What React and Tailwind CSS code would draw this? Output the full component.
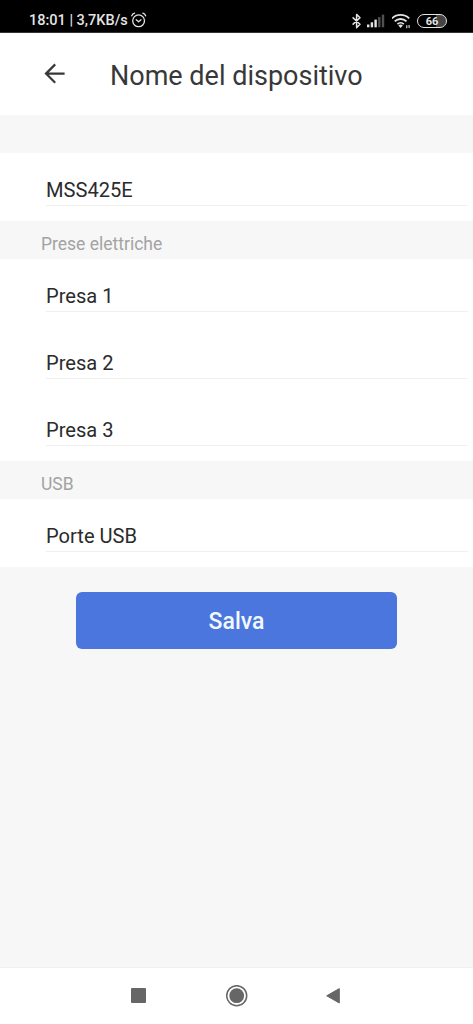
const sections = [
  { title: "", items: ["MSS425E"] },
  { title: "Prese elettriche", items: ["Presa 1", "Presa 2", "Presa 3"] },
  { title: "USB", items: ["Porte USB"] },
];

function AlarmIcon() {
  return (
    <svg className="ml-[3px] w-4 h-4" viewBox="0 0 16 16" fill="none" stroke="currentColor" strokeWidth="1.3" strokeLinecap="round" strokeLinejoin="round">
      <circle cx="7.6" cy="8.8" r="5.9" />
      <path d="M.8 3.8C1.2 2.6 2.2 1.6 3.6 1.2M14.6 3.8c-.4-1.2-1.4-2.2-2.8-2.6M5.2 7.8l2.4 2 2.4-2" />
    </svg>
  );
}

function BluetoothIcon() {
  return (
    <svg className="w-[10px] h-[16px]" viewBox="0 0 10 16" fill="none" stroke="currentColor" strokeWidth="1.5" strokeLinejoin="round">
      <path d="M.6 4.4l7.4 6.8-3.4 3.4V1.4L8 4.8.6 11.6" />
    </svg>
  );
}

function SignalIcon() {
  return (
    <svg className="ml-[5px] w-[18px] h-[14px]" viewBox="0 0 18 14" fill="currentColor">
      <rect x="0" y="10.5" width="2.4" height="2.8" />
      <rect x="3.7" y="8.3" width="2.4" height="5" />
      <rect x="7.4" y="5.6" width="2.4" height="7.7" />
      <rect x="11.1" y="3" width="2.4" height="10.3" opacity="0.35" />
      <rect x="14.8" y="0.6" width="2.4" height="12.7" opacity="0.35" />
    </svg>
  );
}

function WifiIcon() {
  return (
    <svg className="ml-[7px] w-[20px] h-[16px]" viewBox="0 0 20 16" fill="none" stroke="currentColor" strokeWidth="1.8">
      <path d="M0 5.4a12.4 12.4 0 0 1 17.2 0M2.7 8.4a8.4 8.4 0 0 1 11.8 0M5.4 11.2a4.6 4.6 0 0 1 6.4 0" />
      <path d="M6.4 12.6 8.6 15l2.2-2.4a3.2 3.2 0 0 0-4.4 0Z" fill="currentColor" stroke="none" />
      <path d="M14.8 12.2v3M17.1 12v3" strokeWidth="1.1" />
    </svg>
  );
}

function StatusBar() {
  return (
    <div className="flex h-[33px] shrink-0 items-center justify-between border-b border-[#333] bg-black pl-[29px] pr-[26px] pt-[8px] text-[#e4e4e4]">
      <div className="flex items-center">
        <span className="pt-[3px] text-[14.5px] leading-none font-medium whitespace-nowrap">18:01 | 3,7KB/s</span>
        <AlarmIcon />
      </div>
      <div className="flex items-center pt-px">
        <BluetoothIcon />
        <SignalIcon />
        <WifiIcon />
        <div className="ml-[5px] flex h-[14px] w-[30px] items-center justify-center rounded-full border-[1.5px] border-[#e4e4e4] bg-linear-to-r from-black from-65% to-[#444] to-65% pt-px text-[11px] leading-none font-bold">
          66
        </div>
      </div>
    </div>
  );
}

function Header() {
  return (
    <header className="flex h-[82px] shrink-0 items-center bg-white text-[#383838]">
      <svg className="ml-[44px] w-[22px] h-[22px]" viewBox="0 0 22 22" fill="none" stroke="currentColor" strokeWidth="2.2">
        <path d="M20.6 10.6H2M11.2 1.4 2 10.6l9.2 9.2" />
      </svg>
      <h1 className="ml-[44px] pt-[3px] text-[27px] leading-8 whitespace-nowrap">Nome del dispositivo</h1>
    </header>
  );
}

function Section({ title, items }) {
  return (
    <section>
      <h2 className="flex h-[38px] items-center pl-[41px] pt-[8px] text-[17.5px] text-[#a3a3a3]">{title}</h2>
      <div className="bg-white pb-px">
        {items.map((item) => (
          <div key={item} className="h-[67px] pl-[46px] pr-[5px]">
            <div className="h-[53px] border-b border-[#f0f0f0] pt-[25px] text-[20.1px] leading-6 text-[#2b2b2b]">{item}</div>
          </div>
        ))}
      </div>
    </section>
  );
}

function NavBar() {
  return (
    <nav className="flex h-[57px] shrink-0 items-center border-t border-[#f0f0f0] bg-white text-[#666]">
      <div className="ml-[131px] mb-px h-[15px] w-[15px] rounded-[1px] bg-[#666]" />
      <svg className="ml-[80px] w-[22px] h-[22px]" viewBox="0 0 22 22" fill="none" stroke="currentColor">
        <circle cx="10.7" cy="10.7" r="10" strokeWidth="1.5" />
        <circle cx="10.7" cy="10.7" r="7.4" fill="currentColor" stroke="none" />
      </svg>
      <svg className="ml-[78px] w-[14px] h-[16px]" viewBox="0 0 14 16" fill="currentColor" stroke="currentColor" strokeLinejoin="round">
        <path d="M.7 7.8 13.3.6v14.4Z" />
      </svg>
    </nav>
  );
}

export default function App() {
  return (
    <div className="flex h-screen w-full flex-col overflow-hidden bg-[#f7f7f7] font-[Roboto,sans-serif]">
      <StatusBar />
      <Header />
      <main className="flex-1">
        {sections.map((section) => (
          <Section key={section.items[0]} {...section} />
        ))}
        <button type="button" className="mx-auto mt-[25px] block h-[57px] w-[321px] rounded-[6px] bg-[#4a76dd] pt-[3px] text-[23px] font-medium text-[#f2f8ff]">
          Salva
        </button>
      </main>
      <NavBar />
    </div>
  );
}
